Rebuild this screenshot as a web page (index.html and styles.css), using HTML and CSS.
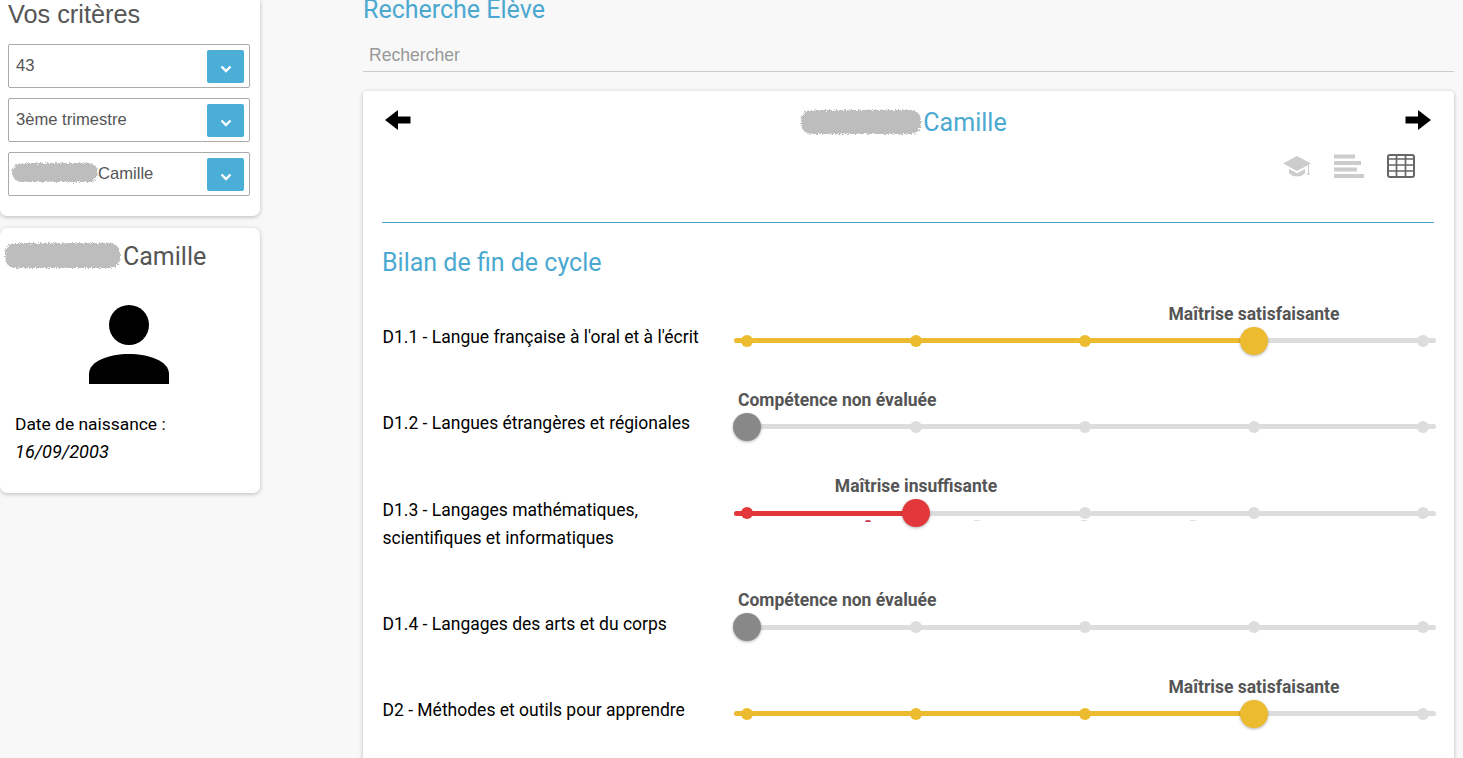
FILE: index.html
```html
<!DOCTYPE html>
<html lang="fr">

<head>
    <meta charset="UTF-8">
    <title>Bilan de fin de cycle</title>
    <link rel="stylesheet" href="styles.css">
</head>

<body>
    <!-- bord irrégulier des noms masqués -->
    <svg class="filtres" width="0" height="0">
        <filter id="bruit" x="-10%" y="-30%" width="120%" height="160%">
            <feTurbulence type="fractalNoise" baseFrequency="0.7" numOctaves="2" seed="4" />
            <feDisplacementMap in="SourceGraphic" scale="5" />
        </filter>
    </svg>

    <div class="page">
        <aside class="sidebar">
            <section class="card criteres">
                <h2 class="criteres-titre">Vos critères</h2>
                <div class="select"><span>43</span><button class="select-btn" aria-label="Ouvrir"><svg width="12" height="8" viewBox="0 0 12 8"><path d="M1.5 1.5 6 6l4.5-4.5" fill="none" stroke="#fff" stroke-width="2.4"/></svg></button></div>
                <div class="select"><span>3ème trimestre</span><button class="select-btn" aria-label="Ouvrir"><svg width="12" height="8" viewBox="0 0 12 8"><path d="M1.5 1.5 6 6l4.5-4.5" fill="none" stroke="#fff" stroke-width="2.4"/></svg></button></div>
                <div class="select select-nom"><i class="masque masque-select"></i><span>Camille</span><button class="select-btn" aria-label="Ouvrir"><svg width="12" height="8" viewBox="0 0 12 8"><path d="M1.5 1.5 6 6l4.5-4.5" fill="none" stroke="#fff" stroke-width="2.4"/></svg></button></div>
            </section>

            <section class="card eleve">
                <h2 class="eleve-nom"><i class="masque masque-eleve"></i>Camille</h2>
                <svg class="avatar" width="80" height="80" viewBox="0 0 80 80">
                    <circle cx="40" cy="20" r="20" />
                    <path d="M0 79V69C0 56 20 49 40 49s40 7 40 20v10z" />
                </svg>
                <p class="naissance">Date de naissance :<br><em>16/09/2003</em></p>
            </section>
        </aside>

        <main class="contenu">
            <h1 class="recherche-titre">Recherche Elève</h1>
            <div class="recherche">Rechercher</div>

            <section class="card bilan">
                <div class="entete">
                    <svg width="26" height="20" viewBox="0 0 26 20"><path d="M0 10 13 0v6.500h12.500v7H13V20z" /></svg>
                    <div class="entete-nom"><i class="masque masque-entete"></i>Camille</div>
                    <svg width="26" height="20" viewBox="0 0 26 20"><path d="M26 10 13 0v6.500H.5v7H13V20z" /></svg>
                </div>

                <div class="vues">
                    <svg width="28" height="24" viewBox="0 0 28 24" fill="#ccc">
                        <path d="M14 2 0 9.500 14 17l14-7.500z" />
                        <path d="M6 15v4c2 2.500 5 3.500 8 3.500s6-1 8-3.500v-4l-8 4.200z" />
                        <path d="M25 11h1v7l.8 3h-2.600l.8-3z" />
                    </svg>
                    <svg width="30" height="24" viewBox="0 0 30 24" fill="#ccc">
                        <rect y=".5" width="21" height="4" />
                        <rect y="7" width="27" height="4" />
                        <rect y="13.500" width="23" height="4" />
                        <rect y="20" width="30" height="4" />
                    </svg>
                    <svg width="28" height="24" viewBox="0 0 28 24">
                        <rect x="1" y="1" width="26" height="22" rx="2" fill="none" stroke="#666" stroke-width="2" />
                        <path d="M1 5h26M1 11h26M1 17h26M9.500 2v20M18.500 2v20" fill="none" stroke="#666" stroke-width="1.700" />
                    </svg>
                </div>

                <hr class="separateur">

                <h2 class="bilan-titre">Bilan de fin de cycle</h2>

                <div class="ligne">
                    <div class="domaine">D1.1 - Langue française à l'oral et à l'écrit</div>
                    <div class="slider jaune">
                        <div class="remplissage" style="width: 520px"></div>
                        <div class="stop"><i class="point"></i></div>
                        <div class="stop"><i class="point"></i></div>
                        <div class="stop"><i class="point"></i></div>
                        <div class="stop"><i class="point actif"></i><b class="niveau">Maîtrise satisfaisante</b></div>
                        <div class="stop"><i class="point gris"></i></div>
                    </div>
                </div>

                <div class="ligne">
                    <div class="domaine">D1.2 - Langues étrangères et régionales</div>
                    <div class="slider neutre">
                        <div class="stop"><i class="point actif"></i><b class="niveau niveau-debut">Compétence non évaluée</b></div>
                        <div class="stop"><i class="point gris"></i></div>
                        <div class="stop"><i class="point gris"></i></div>
                        <div class="stop"><i class="point gris"></i></div>
                        <div class="stop"><i class="point gris"></i></div>
                    </div>
                </div>

                <div class="ligne">
                    <div class="domaine">D1.3 - Langages mathématiques,<br>scientifiques et informatiques</div>
                    <div class="slider rouge">
                        <div class="remplissage" style="width: 182px"></div>
                        <div class="stop"><i class="point"></i></div>
                        <div class="stop"><i class="point actif"></i><b class="niveau">Maîtrise insuffisante</b></div>
                        <div class="stop"><i class="point gris"></i></div>
                        <div class="stop"><i class="point gris"></i></div>
                        <div class="stop"><i class="point gris"></i></div>
                        <i class="trace trace-rouge" style="left: 131px"></i>
                        <i class="trace" style="left: 240px"></i>
                        <i class="trace" style="left: 347px"></i>
                        <i class="trace" style="left: 456px"></i>
                    </div>
                </div>

                <div class="ligne">
                    <div class="domaine">D1.4 - Langages des arts et du corps</div>
                    <div class="slider neutre">
                        <div class="stop"><i class="point actif"></i><b class="niveau niveau-debut">Compétence non évaluée</b></div>
                        <div class="stop"><i class="point gris"></i></div>
                        <div class="stop"><i class="point gris"></i></div>
                        <div class="stop"><i class="point gris"></i></div>
                        <div class="stop"><i class="point gris"></i></div>
                    </div>
                </div>

                <div class="ligne">
                    <div class="domaine">D2 - Méthodes et outils pour apprendre</div>
                    <div class="slider jaune">
                        <div class="remplissage" style="width: 520px"></div>
                        <div class="stop"><i class="point"></i></div>
                        <div class="stop"><i class="point"></i></div>
                        <div class="stop"><i class="point"></i></div>
                        <div class="stop"><i class="point actif"></i><b class="niveau">Maîtrise satisfaisante</b></div>
                        <div class="stop"><i class="point gris"></i></div>
                    </div>
                </div>
            </section>
        </main>
    </div>
</body>

</html>
```

FILE: styles.css
```css
html,
body {
    margin: 0;
    height: 100%;
    overflow: hidden;
}

body {
    background: #f8f8f8;
    font-family: Roboto, sans-serif;
    color: #000;
}

.filtres {
    position: absolute;
}

.page {
    display: flex;
    height: 758px;
    overflow: hidden;
}

.card {
    background: #fff;
    border-radius: 7px;
    box-shadow: 0 1px 4px rgba(0, 0, 0, 0.25);
}

.masque {
    display: block;
    flex-shrink: 0;
    background: #bdbdbd;
    border-radius: 10px;
    filter: url(#bruit);
}

/* colonne de gauche */
.sidebar {
    width: 260px;
    flex-shrink: 0;
    display: flex;
    flex-direction: column;
    gap: 12px;
}

.criteres {
    height: 216px;
    box-sizing: border-box;
    padding: 0 10px 0 8px;
    border-radius: 0 0 7px 7px;
}

.criteres-titre {
    margin: 0;
    height: 44px;
    font: 400 25.3px/28px "Liberation Sans", sans-serif;
    color: #555;
}

.select {
    display: flex;
    align-items: center;
    box-sizing: border-box;
    height: 44px;
    margin-bottom: 10px;
    padding: 0 5px 0 7px;
    border: 1px solid #aaa;
    border-radius: 2px;
    font: 16.600px/20px "Liberation Sans", sans-serif;
    color: #555;
}

.select span {
    flex: 1;
    margin-top: -1px;
}

.select-nom {
    padding-left: 1px;
}

.select-btn {
    width: 37px;
    height: 33px;
    padding: 4px 0 0;
    border: 0;
    border-radius: 2px;
    background: #4aaed6;
}

.masque-select {
    width: 86px;
    height: 19px;
    margin: -3px 0 0 2px;
}

.eleve {
    height: 265px;
}

.eleve-nom {
    display: flex;
    align-items: center;
    gap: 3px;
    margin: 0;
    padding: 15px 0 0 5px;
    font-size: 25px;
    font-weight: 400;
    line-height: 28px;
    color: #555;
}

.masque-eleve {
    width: 115px;
    height: 25px;
    margin-top: -3px;
}

.avatar {
    display: block;
    margin: 34px 0 0 89px;
}

.naissance {
    margin: 25px 0 0 15px;
    font-size: 17.400px;
    line-height: 28px;
}

.naissance em {
    font-size: 18.200px;
}

/* partie principale */
.contenu {
    width: 1091px;
    margin-left: 103px;
    flex-shrink: 0;
}

.recherche-titre {
    margin: 0;
    height: 40px;
    font-size: 25px;
    font-weight: 400;
    line-height: 20px;
    color: #4ba9d1;
}

.recherche {
    box-sizing: border-box;
    height: 32px;
    padding: 4px 0 0 6px;
    border-bottom: 1px solid #ccc;
    font: 17.600px/22px "Liberation Sans", sans-serif;
    color: #999;
}

.bilan {
    height: 700px;
    margin-top: 19px;
    padding: 0 20px 0 19px;
    border-radius: 4px;
}

.entete {
    display: flex;
    align-items: center;
    justify-content: space-between;
    padding: 15px 3px 0;
    height: 27px;
}

.entete-nom {
    display: flex;
    align-items: center;
    gap: 2px;
    margin: 6px 0 0 -8px;
    font-size: 25px;
    line-height: 28px;
    color: #4ba9d1;
}

.masque-entete {
    width: 120px;
    height: 24px;
    margin-top: -2px;
}

.vues {
    display: flex;
    justify-content: flex-end;
    gap: 23px;
    margin-top: 21px;
    padding-right: 19px;
}

.separateur {
    margin: 44px 0 0;
    border: 0;
    border-top: 1px solid #4a9fbf;
}

.bilan-titre {
    margin: 26px 0 0;
    font-size: 25px;
    font-weight: 400;
    line-height: 28px;
    color: #4ba9d1;
}

.ligne {
    display: grid;
    grid-template-columns: 352px 702px;
    align-items: start;
    padding-bottom: 58.300px;
}

.bilan-titre + .ligne {
    margin-top: 46px;
}

.domaine {
    padding-left: 0.5px;
    font-size: 17.500px;
    line-height: 28px;
}

/* curseur de compétence */
.slider {
    position: relative;
    display: flex;
    justify-content: space-between;
    align-items: center;
    height: 5px;
    margin-top: 15px;
    padding: 0 13px;
    background: #ddd;
    border-radius: 3px;
}

.remplissage {
    position: absolute;
    top: 0;
    left: 0;
    height: 5px;
    border-radius: 3px;
    background: var(--couleur);
}

.stop {
    position: relative;
    display: flex;
    justify-content: center;
    align-items: center;
    width: 0;
    height: 5px;
}

.point {
    flex-shrink: 0;
    width: 12px;
    height: 12px;
    border-radius: 50%;
    background: var(--couleur);
}

.point.gris {
    background: #ddd;
}

.point.actif {
    width: 28px;
    height: 28px;
    box-shadow: 0 1px 3px rgba(0, 0, 0, 0.3);
}

.niveau {
    position: absolute;
    bottom: 18.500px;
    left: 50%;
    transform: translateX(-50%);
    font-size: 17.500px;
    font-weight: 700;
    line-height: 22px;
    white-space: nowrap;
    color: #555;
}

.niveau-debut {
    left: -9px;
    transform: none;
}

.trace {
    position: absolute;
    top: 9px;
    width: 6px;
    height: 1px;
    border-radius: 3px 3px 0 0;
    background: #ddd;
}

.trace-rouge {
    height: 2px;
    background: #c8475a;
}

.jaune {
    --couleur: #edbb2f;
}

.rouge {
    --couleur: #e2383c;
}

.neutre {
    --couleur: #888;
}
```
